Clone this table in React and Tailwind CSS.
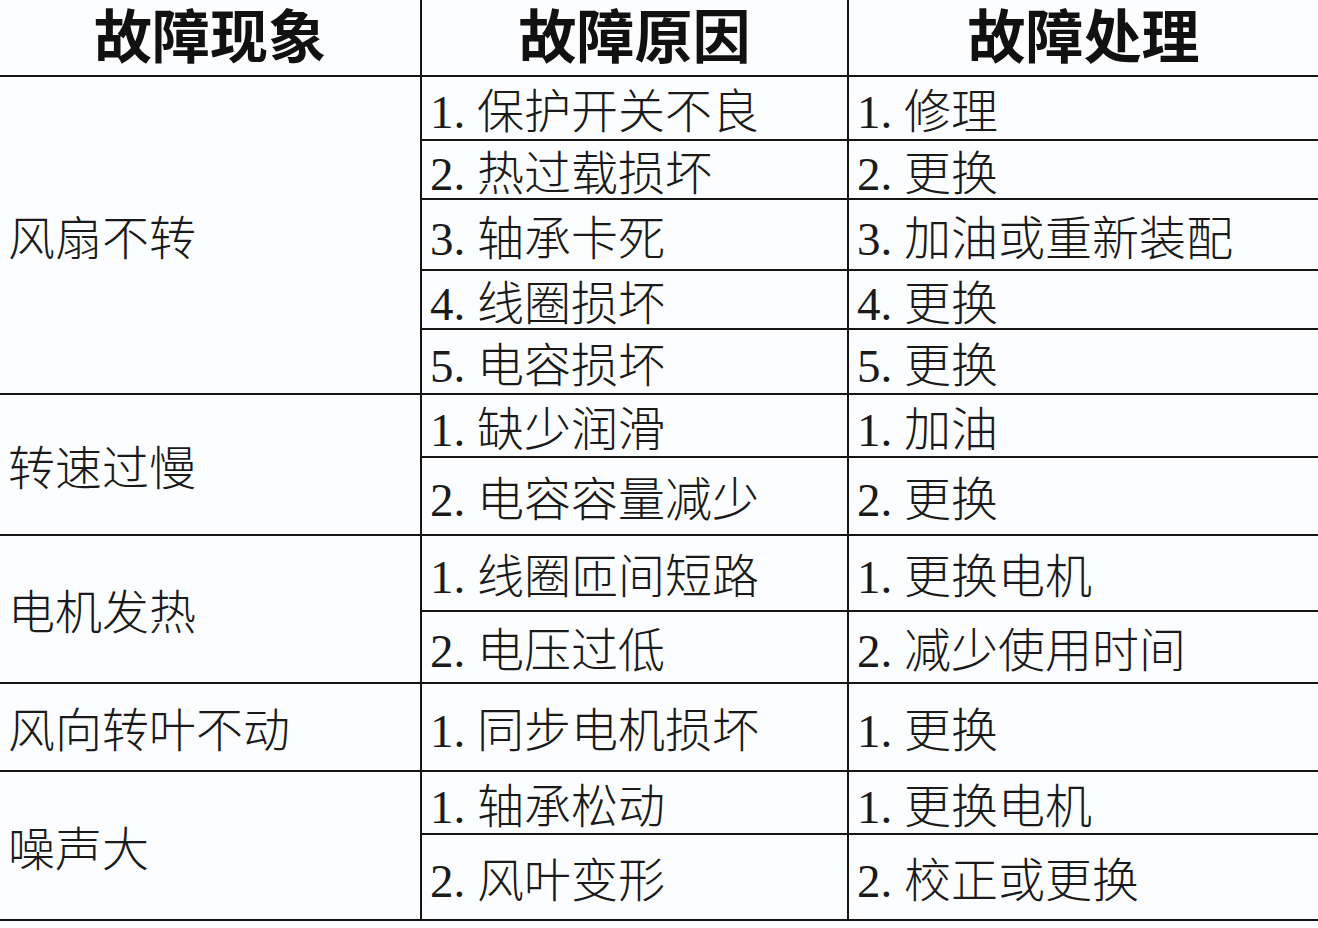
const groups = [
  {
    name: "风扇不转",
    rows: [
      ["1. 保护开关不良", "1. 修理"],
      ["2. 热过载损坏", "2. 更换"],
      ["3. 轴承卡死", "3. 加油或重新装配"],
      ["4. 线圈损坏", "4. 更换"],
      ["5. 电容损坏", "5. 更换"],
    ],
  },
  {
    name: "转速过慢",
    rows: [
      ["1. 缺少润滑", "1. 加油"],
      ["2. 电容容量减少", "2. 更换"],
    ],
  },
  {
    name: "电机发热",
    rows: [
      ["1. 线圈匝间短路", "1. 更换电机"],
      ["2. 电压过低", "2. 减少使用时间"],
    ],
  },
  {
    name: "风向转叶不动",
    rows: [["1. 同步电机损坏", "1. 更换"]],
  },
  {
    name: "噪声大",
    rows: [
      ["1. 轴承松动", "1. 更换电机"],
      ["2. 风叶变形", "2. 校正或更换"],
    ],
  },
];

const spans = {
  1: "row-span-1",
  2: "row-span-2",
  5: "row-span-5",
};

const font = {
  fontFamily: '"Liberation Serif", "Noto Sans CJK SC", serif',
};

function Cell({ children, className = "" }) {
  return (
    <div
      className={
        "bg-[#fcfdff] flex items-center pl-[8px] pt-[9px] text-[47px] leading-none font-light text-[#1a1a1a] whitespace-nowrap " +
        className
      }
    >
      {children}
    </div>
  );
}

export default function App() {
  return (
    <div className="w-[1318px] h-[928px] bg-[#fcfdff] overflow-hidden" style={font}>
      <div className="grid grid-cols-[420px_425px_1fr] grid-rows-[75px_62px_57px_69px_57px_63px_61px_76px_74px_70px_86px_61px_84px] gap-[2px] bg-[#151515] border-b-2 border-[#151515]">
        {["故障现象", "故障原因", "故障处理"].map((h) => (
          <div
            key={h}
            className="bg-[#fcfdff] flex items-center justify-center pt-[3px] text-[58px] leading-none font-semibold text-[#111]"
          >
            {h}
          </div>
        ))}
        {groups.map((g) => [
          <Cell key={g.name} className={spans[g.rows.length]}>
            {g.name}
          </Cell>,
          ...g.rows.flatMap(([cause, fix]) => [
            <Cell key={g.name + cause}>{cause}</Cell>,
            <Cell key={g.name + cause + fix}>{fix}</Cell>,
          ]),
        ])}
      </div>
    </div>
  );
}
